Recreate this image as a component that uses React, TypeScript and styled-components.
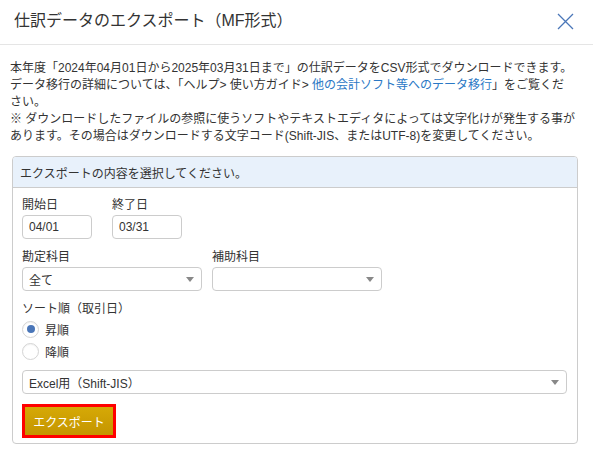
import React from 'react';
import styled, { createGlobalStyle } from 'styled-components';

const GlobalStyle = createGlobalStyle`
  body {
    margin: 0;
    background: #fff;
    color: #333;
    font-family: 'Liberation Sans', 'Noto Sans CJK JP', sans-serif;
    font-size: 12px;
  }
`;

const SModal = styled.div`
  width: 593px;
  height: 469px;
  background: #fff;
`;

const SHeader = styled.div`
  height: 45px;
  box-sizing: border-box;
  display: flex;
  align-items: center;
  justify-content: space-between;
  padding: 0 19px 2px 14px;
  border-bottom: 1px solid #e5e5e5;
`;

const STitle = styled.h4`
  margin: 0;
  font-size: 16px;
  font-weight: normal;
  line-height: 22px;
  color: #333;
`;

const SClose = styled.button`
  width: 17px;
  height: 17px;
  padding: 0;
  border: none;
  background: none;
  display: flex;
`;

const SBody = styled.div`
  padding: 15px 13px 0 10px;
`;

const SNote = styled.p`
  margin: 0;
  line-height: 17px;
`;

const SLink = styled.a`
  color: #2a78c5;
  text-decoration: none;
`;

const SPanel = styled.div`
  margin: 11px 2px 0;
  border: 1px solid #ccc;
  border-radius: 4px;
`;

const SPanelHeading = styled.div`
  height: 30px;
  display: flex;
  align-items: center;
  padding: 0 7px;
  background: #e8f1fb;
  border-bottom: 1px solid #ccc;
  border-radius: 3px 3px 0 0;
`;

const SPanelBody = styled.div`
  padding: 9px 10px 5px 9px;
  display: flex;
  flex-direction: column;
`;

const SRow = styled.div<{ $gap: number }>`
  display: flex;
  gap: ${(p) => p.$gap}px;
  margin-bottom: 10px;
`;

const SField = styled.div`
  display: flex;
  flex-direction: column;
`;

const SLabel = styled.label`
  line-height: 17px;
  margin-bottom: 1px;
`;

const SInput = styled.div<{ $width: number }>`
  width: ${(p) => p.$width}px;
  height: 24px;
  box-sizing: border-box;
  border: 1px solid #ccc;
  border-radius: 4px;
  padding: 0 6px;
  display: flex;
  align-items: center;
  justify-content: space-between;
  color: #333;
`;

const SArrow = styled.span`
  width: 0;
  height: 0;
  border-left: 4px solid transparent;
  border-right: 4px solid transparent;
  border-top: 5px solid #888;
  margin-right: 1px;
`;

const SRadioList = styled.div`
  display: flex;
  flex-direction: column;
  gap: 2px;
  margin-bottom: 9px;
`;

const SRadioRow = styled.div`
  height: 20px;
  display: flex;
  align-items: center;
  gap: 6px;
`;

const SRadio = styled.span<{ $checked?: boolean }>`
  width: 17px;
  height: 17px;
  box-sizing: border-box;
  border: 1px solid #d4d4d4;
  border-radius: 50%;
  display: flex;
  align-items: center;
  justify-content: center;
  background: #fff;
  box-shadow: inset 0 1px 1px rgba(0, 0, 0, 0.05);
  &::after {
    content: '';
    width: 8px;
    height: 8px;
    border-radius: 50%;
    background: ${(p) => (p.$checked ? '#4a76b8' : 'transparent')};
  }
`;

const SButtonFrame = styled.div`
  align-self: flex-start;
  margin-top: 10px;
  border: 3px solid #f00;
`;

const SButton = styled.button`
  width: 88px;
  height: 28px;
  border: none;
  background: linear-gradient(#d6a906, #c49500);
  color: #fff;
  font-family: inherit;
  font-size: 12px;
  display: flex;
  align-items: center;
  justify-content: center;
`;

const Select = ({ width, value }: { width: number; value?: string }) => (
  <SInput $width={width}>
    <span>{value}</span>
    <SArrow />
  </SInput>
);

const App = () => {
  return (
    <SModal>
      <GlobalStyle />
      <SHeader>
        <STitle>仕訳データのエクスポート（MF形式）</STitle>
        <SClose aria-label='close'>
          <svg width='17' height='17' viewBox='0 0 17 17'>
            <path d='M1 1 L16 16 M16 1 L1 16' stroke='#4a76b8' strokeWidth='1.3' fill='none' />
          </svg>
        </SClose>
      </SHeader>
      <SBody>
        <SNote>
          本年度「2024年04月01日から2025年03月31日まで」の仕訳データをCSV形式でダウンロードできます。
          <br />
          データ移行の詳細については、「ヘルプ&gt; 使い方ガイド&gt; <SLink href='#'>他の会計ソフト等へのデータ移行</SLink>」をご覧くだ
          <br />
          さい。
          <br />
          ※ ダウンロードしたファイルの参照に使うソフトやテキストエディタによっては文字化けが発生する事があります。その場合はダウンロードする文字コード(Shift-JIS、またはUTF-8)を変更してください。
        </SNote>
        <SPanel>
          <SPanelHeading>エクスポートの内容を選択してください。</SPanelHeading>
          <SPanelBody>
            <SRow $gap={20}>
              <SField>
                <SLabel>開始日</SLabel>
                <SInput $width={70}>04/01</SInput>
              </SField>
              <SField>
                <SLabel>終了日</SLabel>
                <SInput $width={70}>03/31</SInput>
              </SField>
            </SRow>
            <SRow $gap={10}>
              <SField>
                <SLabel>勘定科目</SLabel>
                <Select width={180} value='全て' />
              </SField>
              <SField>
                <SLabel>補助科目</SLabel>
                <Select width={170} />
              </SField>
            </SRow>
            <SLabel>ソート順（取引日）</SLabel>
            <SRadioList>
              <SRadioRow>
                <SRadio $checked />
                昇順
              </SRadioRow>
              <SRadioRow>
                <SRadio />
                降順
              </SRadioRow>
            </SRadioList>
            <Select width={545} value='Excel用（Shift-JIS）' />
            <SButtonFrame>
              <SButton>エクスポート</SButton>
            </SButtonFrame>
          </SPanelBody>
        </SPanel>
      </SBody>
    </SModal>
  );
};

export default App;
